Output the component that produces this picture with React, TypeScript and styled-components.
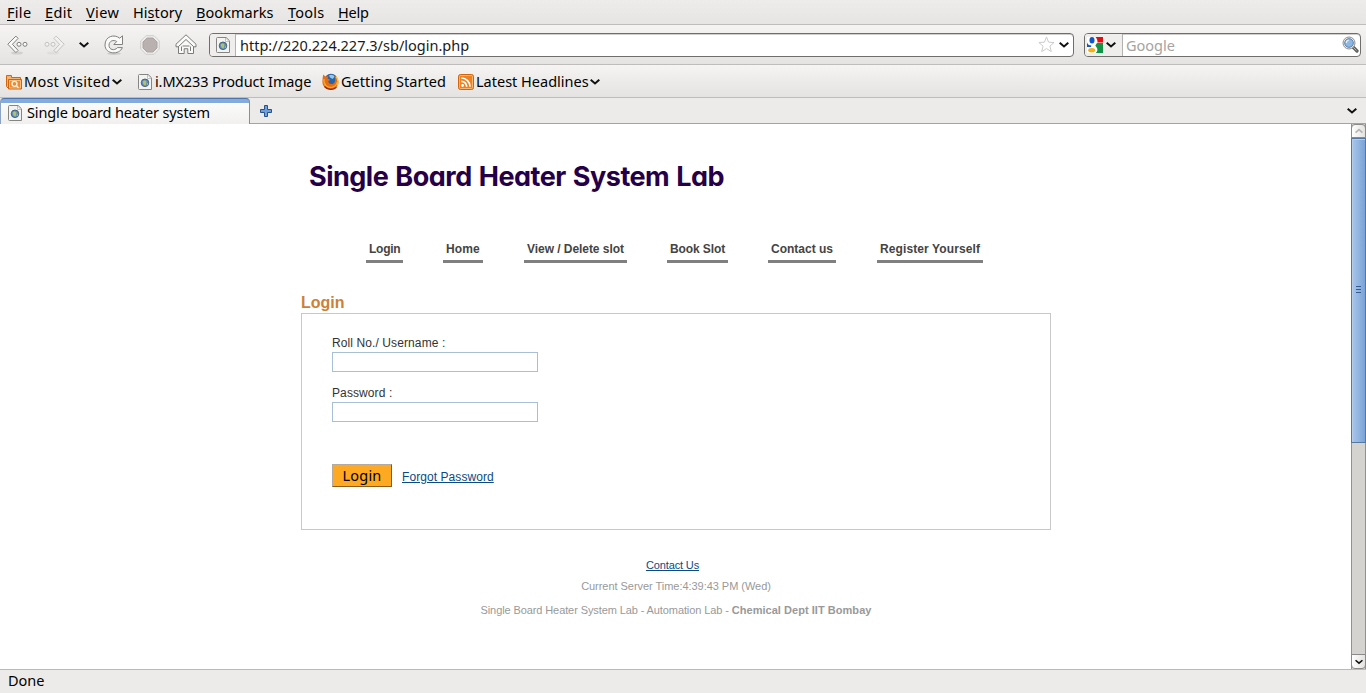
import React from "react";
import styled, { createGlobalStyle } from "styled-components";

const GlobalStyle = createGlobalStyle`
  * { box-sizing: border-box; }
  html, body { margin: 0; padding: 0; background: #fff; overflow: hidden; }
  svg { display: block; flex: none; }
`;

const uiFont = `"Noto Sans", "Open Sans", sans-serif`;
const pageFont = `"Liberation Sans", Arial, sans-serif`;

const Window = styled.div`
  display: flex;
  flex-direction: column;
  width: 1366px;
  height: 693px;
  font-family: ${uiFont};
  font-size: 14.5px;
  color: #000;
  background: #ecebe9;
`;

const MenuBar = styled.nav`
  display: flex;
  height: 25px;
  padding-left: 7px;
  gap: 14px;
  background: linear-gradient(#edecea, #e6e5e3);
  border-bottom: 1px solid #bebdbb;
`;

const UiText = styled.span<{ $w: number; $ls?: number; $lh?: number }>`
  display: block;
  width: ${(p) => p.$w}px;
  letter-spacing: ${(p) => p.$ls ?? 0}px;
  line-height: ${(p) => p.$lh ?? 25}px;
  white-space: nowrap;
  flex: none;
`;

const AccessKey = styled.span`
  text-decoration: underline;
  text-underline-offset: 2px;
  text-decoration-thickness: 1px;
  text-decoration-skip-ink: none;
`;

const NavBar = styled.div`
  display: flex;
  align-items: center;
  height: 40px;
  padding: 0 5px 0 7px;
  background: linear-gradient(#f5f4f3, #e4e3e1);
  border-bottom: 1px solid #bebdbb;
`;

const NavButtons = styled.div`
  display: flex;
  align-items: center;
  width: 202px;
`;

const IconSlot = styled.span<{ $w: number }>`
  display: flex;
  align-items: center;
  width: ${(p) => p.$w}px;
  flex: none;
`;

const FieldBox = styled.div<{ $w: number }>`
  display: flex;
  align-items: center;
  width: ${(p) => p.$w}px;
  height: 24px;
  background: #fff;
  border: 1px solid #6f6e6c;
  border-radius: 4px;
  overflow: hidden;
  box-shadow: inset 0 1px 0 #cfcecc;
`;

const FieldButton = styled.div<{ $w: number; $pad?: number }>`
  display: flex;
  align-items: center;
  gap: 3px;
  width: ${(p) => p.$w}px;
  height: 22px;
  padding-left: ${(p) => p.$pad ?? 3}px;
  background: #efeeec;
  border-right: 1px solid #b3b2b0;
`;

const FieldText = styled.div<{ $color?: string; $pad?: number }>`
  flex: 1;
  padding-left: ${(p) => p.$pad ?? 4}px;
  line-height: 22px;
  color: ${(p) => p.$color ?? "#1a1a1a"};
  white-space: nowrap;
`;

const BookmarkBar = styled.div`
  display: flex;
  align-items: center;
  height: 33px;
  padding: 1px 0 0 6px;
  background: linear-gradient(#f5f4f3, #e4e3e1);
  border-bottom: 1px solid #bebdbb;
`;

const Bookmark = styled.div<{ $w: number }>`
  display: flex;
  align-items: center;
  width: ${(p) => p.$w}px;
  flex: none;
`;

const TabStrip = styled.div`
  display: flex;
  align-items: stretch;
  height: 26px;
  background: #ecebe9;
  border-bottom: 1px solid #a5a4a2;
`;

const Tab = styled.div`
  display: flex;
  align-items: center;
  width: 250px;
  height: 26px;
  padding: 2px 0 0 7px;
  border: 1px solid #8f8e8c;
  border-top-color: #4e74a8;
  border-bottom: 0;
  border-left-color: #8ba4c6;
  border-radius: 4px 4px 0 0;
  background: linear-gradient(#84abdc 0, #84abdc 4px, #fbfbfa 4px, #f1f0ef 100%);
`;

const NewTab = styled.div`
  display: flex;
  align-items: center;
  flex: 1;
  padding-left: 10px;
`;

const TabList = styled.div`
  display: flex;
  align-items: center;
  width: 19px;
`;

const Viewport = styled.div`
  display: flex;
  height: 545px;
  background: #fff;
  font-family: ${pageFont};
`;

const Page = styled.main`
  width: 1351px;
  height: 545px;
  padding: 36px 0 0 301px;
`;

const Title = styled.h1`
  margin: 0 0 0 8px;
  height: 34px;
  font: 700 27px/34px Inter, sans-serif;
  font-feature-settings: "cv11";
  letter-spacing: -0.5px;
  word-spacing: 1.2px;
  color: #250047;
  white-space: nowrap;
`;

const SiteNav = styled.nav`
  display: flex;
  margin: 48px 0 0 65px;
`;

const SiteLink = styled.a<{ $w: number; $mr: number; $ls: number }>`
  width: ${(p) => p.$w}px;
  height: 21px;
  margin-right: ${(p) => p.$mr}px;
  padding-left: 3px;
  border-bottom: 3px solid #808080;
  font-size: 12px;
  font-weight: bold;
  line-height: 14px;
  letter-spacing: ${(p) => p.$ls}px;
  color: #444;
  white-space: nowrap;
`;

const SectionTitle = styled.h2`
  margin: 30px 0 0;
  height: 20px;
  font-size: 16px;
  line-height: 20px;
  color: #cb8137;
`;

const LoginPanel = styled.form`
  width: 750px;
  height: 217px;
  padding: 21px 30px 0;
  border: 1px solid #c8c8c8;
`;

const Field = styled.label`
  display: block;
  height: 50px;
  font-size: 12px;
  line-height: 17px;
  letter-spacing: 0.1px;
  color: #333;
`;

const Input = styled.input`
  display: block;
  width: 206px;
  height: 20px;
  padding: 0 3px;
  border: 1px solid #a9bfd8;
  border-radius: 0;
  outline: 0;
  background: #fff;
`;

const Actions = styled.div`
  display: flex;
  align-items: baseline;
  gap: 10px;
  height: 24px;
  margin-top: 29px;
`;

const Submit = styled.button`
  width: 60px;
  height: 23px;
  padding: 0;
  border: 1px solid;
  border-color: #b5aaa0 #8f5a12 #8f5a12 #b5aaa0;
  background: #ffa822;
  font: 14.5px/21px ${uiFont};
  letter-spacing: 0.2px;
  color: #000;
`;

const TextLink = styled.a<{ $size: number; $ls: number }>`
  font-size: ${(p) => p.$size}px;
  letter-spacing: ${(p) => p.$ls}px;
  color: #0b4a85;
  text-decoration: underline;
`;

const Footer = styled.footer`
  display: flex;
  flex-direction: column;
  align-items: center;
  width: 750px;
  padding-top: 28px;
  font-size: 11px;
  color: #999;
`;

const FooterLine = styled.div<{ $h: number; $shift?: number; $ls?: number }>`
  height: ${(p) => p.$h}px;
  line-height: 14px;
  padding-right: ${(p) => p.$shift ?? 0}px;
  letter-spacing: ${(p) => p.$ls ?? 0}px;
  white-space: nowrap;
`;

const Department = styled.b`
  letter-spacing: 0.04px;
`;

const ScrollBar = styled.div`
  display: flex;
  flex-direction: column;
  width: 15px;
  height: 545px;
  background: #d5d3d0;
  border: solid #92918f;
  border-width: 0 1px;
`;

const ScrollButton = styled.div<{ $down?: boolean }>`
  display: flex;
  align-items: center;
  justify-content: center;
  width: 15px;
  height: ${(p) => (p.$down ? 15 : 14)}px;
  margin: ${(p) => (p.$down ? "auto -1px 0" : "0 -1px")};
  border: 1px solid #8b8a88;
  border-radius: ${(p) => (p.$down ? "0 0 4px 4px" : "4px 4px 0 0")};
  background: linear-gradient(90deg, #fff, #e3e2e0);
`;

const Thumb = styled.div`
  display: flex;
  flex-direction: column;
  align-items: center;
  justify-content: center;
  gap: 2px;
  width: 15px;
  height: 305px;
  margin: 0 -1px;
  padding-bottom: 2px;
  border: 1px solid #54789f;
  background: linear-gradient(90deg, #a9c6ea, #7ba3d6);
  box-shadow: inset 1px 1px 0 #b5cdec;
`;

const Grip = styled.span`
  width: 5px;
  height: 1px;
  background: #365c8f;
`;

const StatusBar = styled.footer`
  height: 24px;
  padding-left: 8px;
  border-top: 1px solid #bab9b7;
  background: #ecebe9;
`;

const Chevron = ({ w = 10, color = "#111", up }: { w?: number; color?: string; up?: boolean }) => (
  <svg width={w} height="6" viewBox="0 0 10 6" fill="none" stroke={color} strokeWidth="2">
    <path d={up ? "M.7 5 5 1.300 9.300 5" : "M.7 .8 5 4.500 9.300 .8"} />
  </svg>
);

const PageIcon = () => (
  <svg width="14" height="16" viewBox="0 0 14 16">
    <path d="M1.5.5h8.7l3.3 3.3v11.7h-12a1 1 0 0 1-1-1v-13a1 1 0 0 1 1-1z" fill="#f3f3f2" stroke="#858583" />
    <path d="M9.5 1v3.500H13z" fill="#fff" stroke="#b5b5b3" strokeWidth=".8" />
    <circle cx="7" cy="8.800" r="3.800" fill="#5a8cc2" stroke="#44586d" strokeWidth=".9" />
    <path d="M4.600 7.600 6.700 6.200l1.800 1.200-.3 1.800-.7 2.600-2-1.400zM9 9.400l1.300-.3-.6 1.800-1 .4z" fill="#b4c062" />
  </svg>
);

const BackIcon = ({ dim }: { dim?: boolean }) => (
  <svg width="22" height="20" viewBox="0 0 22 20" opacity={dim ? 0.38 : 1}>
    <ellipse cx="10" cy="18" rx="6" ry="1.600" fill="#000" opacity=".1" />
    <g fill="#fafaf9" stroke="#80807e" transform={dim ? "translate(22 0) scale(-1 1)" : undefined}>
      <path d="M8.900 1.100 .8 9.200 8.900 17.600l2.200-2.200-5.700-6.100 5.700-5.900z" strokeLinejoin="round" />
      <circle cx="12" cy="9.300" r="2" />
      <circle cx="18" cy="9.300" r="2" />
    </g>
  </svg>
);

const ReloadIcon = () => (
  <svg width="20" height="20" viewBox="0 0 20 20">
    <ellipse cx="10" cy="18.600" rx="7" ry="1.300" fill="#000" opacity=".12" />
    <path d="M15.700 3.200 18.500.8v8.700H9.800l2.900-3C9.500 4.300 5 6 5 10.200c0 4.700 5.300 6 8.500 2.400h4.900C15.500 20.200 1 19.700 1 10 1 1 10.500-1.200 15.700 3.200z" fill="#fafaf9" stroke="#80807e" strokeLinejoin="round" />
  </svg>
);

const StopIcon = () => (
  <svg width="20" height="20" viewBox="0 0 20 20">
    <path d="M6 .7h8L19.300 6v8L14 19.300H6L.7 14V6z" fill="#eeedec" stroke="#cfcecd" />
    <path d="M7 3h6l4 4v6l-4 4H7l-4-4V7z" fill="#b9b1b0" stroke="#aaa4a3" />
  </svg>
);

const HomeIcon = () => (
  <svg width="22" height="21" viewBox="0 0 22 21">
    <g fill="#fafaf9" stroke="#7b7b79" strokeLinejoin="round">
      <path d="M3.500 11v8.500h5.700v-4.800h3.600v4.800h5.700V11L11 4.500z" />
      <path d="M11 .8 1 10.200v2.600h2.200L11 5.500l7.800 7.300H21v-2.600z" />
      <path d="M6.500 12.500v4.500M15.500 12.500v4.500M7.500 12h7" fill="none" />
    </g>
  </svg>
);

const StarIcon = () => (
  <svg width="17" height="17" viewBox="0 0 17 17">
    <path d="m8.500 1 2.100 5.200 5.500.3-4.200 3.600 1.400 5.500-4.800-3-4.800 3 1.400-5.500L.9 6.500l5.500-.3z" fill="#fff" stroke="#cbcbca" />
  </svg>
);

const GoogleIcon = () => (
  <svg width="16" height="16" viewBox="0 0 16 16">
    <path d="M0 0h16v16H0z" fill="#fff" />
    <path d="M8.500 0H16v5.500h-5.500C10.500 3 10 1.500 8.500 0z" fill="#e60d11" />
    <path d="M16 6v10H8.700c2-1.400 2.300-4 .8-5.700L8.300 8.500 10 6z" fill="#129346" />
    <ellipse cx="5" cy="3.300" rx="2.500" ry="3.300" fill="#1057c8" />
    <path d="M0 5.500C1 8 2.500 8.400 4.300 8.500L4 10H0z" fill="#1057c8" />
    <ellipse cx="4.700" cy="13.300" rx="3.500" ry="2.200" fill="#f4b01b" />
  </svg>
);

const SearchIcon = () => (
  <svg width="17" height="17" viewBox="0 0 17 17">
    <path d="m11 11 4 4" stroke="#60605e" strokeWidth="3.200" strokeLinecap="round" />
    <path d="m11.500 11.500 3 3" stroke="#b9b9b7" strokeWidth="1" />
    <circle cx="7" cy="7" r="6" fill="#e8e8e7" stroke="#90908e" />
    <circle cx="7" cy="7" r="4.300" fill="#8fb7e4" stroke="#5582b5" />
    <path d="M4.300 7a3 3 0 0 1 2.500-2.800" stroke="#e2effb" fill="none" strokeWidth="1.300" />
  </svg>
);

const FolderIcon = () => (
  <svg width="16" height="16" viewBox="0 0 16 16">
    <path d="M.5 1.500h5v2h9v11H2.500l-2-2z" fill="#f3b473" stroke="#d2660f" />
    <path d="M2.500 5.500h13v9.500H2.500z" fill="#e98b35" stroke="#cf640f" />
    <path d="M3.500 6.500h11v7.500h-11z" fill="none" stroke="#f9c891" strokeWidth=".8" />
    <circle cx="8.500" cy="9.800" r="2.500" fill="#e98b35" stroke="#fff0db" strokeWidth="1.300" />
    <path d="m10.500 11.700 2 2" stroke="#fff0db" strokeWidth="1.400" />
  </svg>
);

const FirefoxIcon = () => (
  <svg width="17" height="17" viewBox="0 0 17 17">
    <circle cx="9" cy="7.500" r="6.800" fill="#2762ad" />
    <path d="M7 2.500c2-1.500 5-.5 5.500 1.500L10.500 6 8 4.500z" fill="#8bc9ed" />
    <path d="M1.300 1.600 3.300 3.500 6.500 3.300 5.500 5.500 8.300 6.800 6.300 8.300C6.500 11.300 10.500 12 12.500 9.500c1.300-2 .7-4.700-.2-6.700 2.800 1 4.400 4 4.200 7C16 14 12.600 16.700 8.500 16.700 3.500 16.700.3 13 .4 8.500.5 6 .8 3.500 1.300 1.600z" fill="#e46c12" />
    <path d="M2 6c-.8 5.500 3 9 7.500 8.300 3-.5 5.200-2.500 5.700-5.300" fill="none" stroke="#f8a62b" strokeWidth="1.300" />
    <path d="M14 3.500c2.200 2.700 2.700 5.500 1.200 9" fill="none" stroke="#f7c83c" strokeWidth="1.200" />
    <path d="M2.500 13.500c3 3.500 8.500 3.800 12 .8" fill="none" stroke="#9a2b0a" strokeWidth="1.200" />
  </svg>
);

const FeedIcon = () => (
  <svg width="16" height="16" viewBox="0 0 16 16">
    <rect x=".5" y=".5" width="15" height="15" rx="2" fill="#ef8220" stroke="#cf6510" />
    <rect x="1.500" y="1.500" width="13" height="13" rx="1" fill="none" stroke="#f9b671" />
    <circle cx="4.600" cy="11.500" r="1.400" fill="#fff" />
    <path d="M3.300 7.300a5.400 5.400 0 0 1 5.400 5.500M3.300 4a8.800 8.800 0 0 1 8.800 8.800" fill="none" stroke="#fff" strokeWidth="1.700" />
  </svg>
);

const PlusIcon = () => (
  <svg width="12" height="12" viewBox="0 0 12 12">
    <path d="M4.500.5h3v4h4v3h-4v4h-3v-4h-4v-3h4z" fill="#6f9ed8" stroke="#26518f" strokeLinejoin="round" />
  </svg>
);

const menus = [
  { pre: "", key: "F", post: "ile", w: 24, ls: 0.3 },
  { pre: "", key: "E", post: "dit", w: 27, ls: 0.35 },
  { pre: "", key: "V", post: "iew", w: 33, ls: 0.35 },
  { pre: "Hi", key: "s", post: "tory", w: 49, ls: 0.05 },
  { pre: "", key: "B", post: "ookmarks", w: 78, ls: 0.05 },
  { pre: "", key: "T", post: "ools", w: 36, ls: 0.2 },
  { pre: "", key: "H", post: "elp", w: 31, ls: -0.2 },
];

const links = [
  { text: "Login", w: 37, mr: 40, ls: -0.25 },
  { text: "Home", w: 40, mr: 41, ls: 0.1 },
  { text: "View / Delete slot", w: 103, mr: 40, ls: -0.05 },
  { text: "Book Slot", w: 61, mr: 40, ls: -0.1 },
  { text: "Contact us", w: 68, mr: 41, ls: 0 },
  { text: "Register Yourself", w: 106, mr: 0, ls: 0.11 },
];

export default function App() {
  return (
    <Window>
      <GlobalStyle />
      <MenuBar>
        {menus.map((m) => (
          <UiText key={m.key + m.post} $w={m.w} $ls={m.ls}>
            {m.pre}
            <AccessKey>{m.key}</AccessKey>
            {m.post}
          </UiText>
        ))}
      </MenuBar>
      <NavBar>
        <NavButtons>
          <IconSlot $w={36}><BackIcon /></IconSlot>
          <IconSlot $w={36}><BackIcon dim /></IconSlot>
          <IconSlot $w={25}><Chevron /></IconSlot>
          <IconSlot $w={36}><ReloadIcon /></IconSlot>
          <IconSlot $w={35}><StopIcon /></IconSlot>
          <IconSlot $w={34}><HomeIcon /></IconSlot>
        </NavButtons>
        <FieldBox $w={865}>
          <FieldButton $w={26} $pad={6}><PageIcon /></FieldButton>
          <FieldText>http://220.224.227.3/sb/login.php</FieldText>
          <IconSlot $w={21}><StarIcon /></IconSlot>
          <IconSlot $w={14}><Chevron /></IconSlot>
        </FieldBox>
        <IconSlot $w={10} />
        <FieldBox $w={277}>
          <FieldButton $w={38} $pad={2}>
            <GoogleIcon />
            <Chevron />
          </FieldButton>
          <FieldText $color="#a5a4a2" $pad={3}>Google</FieldText>
          <IconSlot $w={18}><SearchIcon /></IconSlot>
        </FieldBox>
      </NavBar>
      <BookmarkBar>
        <Bookmark $w={132}>
          <IconSlot $w={18}><FolderIcon /></IconSlot>
          <UiText $w={88} $ls={0.25}>Most Visited</UiText>
          <Chevron />
        </Bookmark>
        <Bookmark $w={184}>
          <IconSlot $w={17}><PageIcon /></IconSlot>
          <UiText $w={158} $ls={-0.12}>i.MX233 Product Image</UiText>
        </Bookmark>
        <Bookmark $w={136}>
          <IconSlot $w={19}><FirefoxIcon /></IconSlot>
          <UiText $w={106} $ls={0.05}>Getting Started</UiText>
        </Bookmark>
        <Bookmark $w={150}>
          <IconSlot $w={18}><FeedIcon /></IconSlot>
          <UiText $w={114}>Latest Headlines</UiText>
          <Chevron />
        </Bookmark>
      </BookmarkBar>
      <TabStrip>
        <Tab>
          <IconSlot $w={19}><PageIcon /></IconSlot>
          <UiText $w={190} $ls={-0.12}>Single board heater system</UiText>
        </Tab>
        <NewTab><PlusIcon /></NewTab>
        <TabList><Chevron /></TabList>
      </TabStrip>
      <Viewport>
        <Page>
          <Title>Single Board Heater System Lab</Title>
          <SiteNav>
            {links.map((l) => (
              <SiteLink key={l.text} $w={l.w} $mr={l.mr} $ls={l.ls}>{l.text}</SiteLink>
            ))}
          </SiteNav>
          <SectionTitle>Login</SectionTitle>
          <LoginPanel>
            <Field>Roll No./ Username :<Input type="text" /></Field>
            <Field>Password :<Input type="password" /></Field>
            <Actions>
              <Submit type="button">Login</Submit>
              <TextLink $size={12} $ls={0.07}>Forgot Password</TextLink>
            </Actions>
          </LoginPanel>
          <Footer>
            <FooterLine $h={21} $shift={7}><TextLink $size={11} $ls={-0.13}>Contact Us</TextLink></FooterLine>
            <FooterLine $h={24} $ls={-0.04}>Current Server Time:4:39:43 PM (Wed)</FooterLine>
            <FooterLine $h={14} $ls={-0.1}>Single Board Heater System Lab - Automation Lab - <Department>Chemical Dept IIT Bombay</Department></FooterLine>
          </Footer>
        </Page>
        <ScrollBar>
          <ScrollButton><Chevron w={8} color="#b5b4b2" up /></ScrollButton>
          <Thumb><Grip /><Grip /><Grip /></Thumb>
          <ScrollButton $down><Chevron w={8} /></ScrollButton>
        </ScrollBar>
      </Viewport>
      <StatusBar><UiText $w={60} $lh={21}>Done</UiText></StatusBar>
    </Window>
  );
}
